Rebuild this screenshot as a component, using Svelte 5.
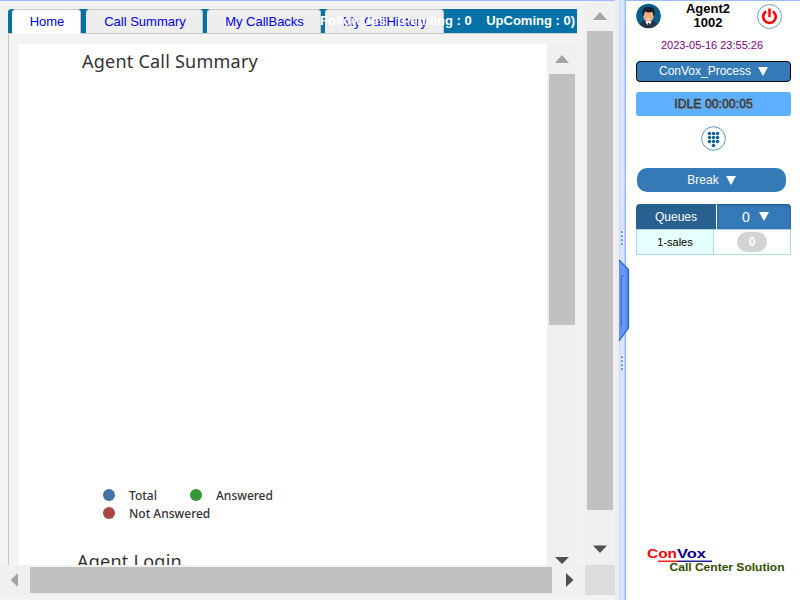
<script>
  const tabs = [
    { label: 'Home', width: 69, gap: 5, active: true },
    { label: 'Call Summary', width: 117, gap: 4 },
    { label: 'My CallBacks', width: 114, gap: 4 },
    { label: 'My CallHistory', width: 119, gap: 0 }
  ];
  const legend = [
    [{ label: 'Total', color: '#4572a7' }, { label: 'Answered', color: '#32963b' }],
    [{ label: 'Not Answered', color: '#aa4643' }]
  ];
  const dots = [0, 1, 2, 3];
</script>

<div class="app">
  <main class="left">
    <div class="upper">
      <div class="page">
        <nav class="tabs">
          {#each tabs as t}
            <span class="tab" class:active={t.active} style:width="{t.width}px" style:margin-right="{t.gap}px">{t.label}</span>
          {/each}
          <b class="follow">FollowUps : (Pending : 0 &nbsp;&nbsp; UpComing : 0)</b>
        </nav>
        <div class="panel">
          <section class="chart">
            <h2 class="sum"><span>Agent Call Summary</span></h2>
            <div class="legend">
              {#each legend as row}
                <div class="row">
                  {#each row as item}
                    <div class="item"><i style:background={item.color}></i><span>{item.label}</span></div>
                  {/each}
                </div>
              {/each}
            </div>
            <h2 class="login">Agent Login</h2>
          </section>
          <div class="bar inner">
            <svg class="arrow" width="30" height="30"><path d="M8 19L15 11L22 19Z" fill="#a3a3a3" /></svg>
            <div class="thumb"></div>
            <svg class="arrow end" width="30" height="10"><path d="M8 2H22L15 9Z" fill="#505050" /></svg>
          </div>
        </div>
      </div>
      <div class="bar outer">
        <svg class="arrow" width="30" height="30"><path d="M8 19L15 11L22 19Z" fill="#a3a3a3" /></svg>
        <div class="thumb"></div>
        <svg class="arrow end" width="30" height="30"><path d="M8 10.5H22L15 18Z" fill="#505050" /></svg>
      </div>
    </div>
    <div class="hbar">
      <svg width="30" height="30"><path d="M18 8V22L10.5 15Z" fill="#a3a3a3" /></svg>
      <div class="hthumb"></div>
      <svg class="right" width="33" height="30"><path d="M15 8V22L22.5 15Z" fill="#505050" /></svg>
      <div class="corner"></div>
    </div>
  </main>

  <div class="gutter"></div>
  <div class="splitter">
    <svg class="grip" width="10" height="150" viewBox="0 0 10 150">
      <defs>
        <linearGradient id="handle"><stop stop-color="#608ff0" /><stop offset=".5" stop-color="#6e9af2" /><stop offset="1" stop-color="#4d80e8" /></linearGradient>
      </defs>
      {#each dots as d}
        <path d="M3 {d * 4}h2v2h-2zM3 {d * 4 + 125}h2v2h-2z" fill="#fff" />
        <path d="M2 {d * 4 + 1}h2v2h-2zM2 {d * 4 + 126}h2v2h-2z" fill="#6c9cf0" />
      {/each}
      <path d="M0 30L9.5 39.5V98L0 111Z" fill="url(#handle)" />
      <path d="M0 30L9.5 39.5V98L0 111" fill="none" stroke="#285fdf" stroke-width="1.2" />
      <path d="M5 46H2.5V96" fill="none" stroke="#2f6de0" />
    </svg>
  </div>

  <aside class="side">
    <header>
      <svg class="avatar" width="26" height="26" viewBox="0 0 26 26">
        <circle cx="12.5" cy="13" r="12.3" fill="#075c88" />
        <path d="M3.5 21Q5 18.5 9.5 17.5H16Q20 18.5 21.5 21A12.3 12.3 0 0 1 3.5 21Z" fill="#263445" />
        <path d="M9.5 17H15.5L15 20L12.5 23L10 20Z" fill="#f4f4f4" />
        <ellipse cx="12.5" cy="12.5" rx="5.3" ry="6" fill="#f2ae85" />
        <path d="M6.8 13Q4.5 4 12 4Q20.5 3 18.2 13H17.5L16.5 9Q12 10 9 8.5L7.5 13Z" fill="#17212b" />
        <path d="M10.5 15.5Q12.5 17.5 14.5 15.5Z" fill="#fff" />
        <path d="M12 20H13.3L13.7 24H11.5Z" fill="#1b2836" />
      </svg>
      <div class="who">Agent2<br />1002</div>
      <svg class="power" width="26" height="26" viewBox="0 0 26 26">
        <circle cx="13.5" cy="13.5" r="12" fill="#fff" stroke="#6ba0c8" />
        <path d="M10.2 8.3A6.3 6.3 0 1 0 16.8 8.3" fill="none" stroke="#f00" stroke-width="2.6" />
        <path d="M13.5 5.5V14" stroke="#f00" stroke-width="2.4" />
      </svg>
    </header>
    <time>2023-05-16 23:55:26</time>
    <div class="process"><span>ConVox_Process</span><i class="down"></i></div>
    <div class="idle">IDLE 00:00:05</div>
    <svg class="pad" width="26" height="26" viewBox="0 0 26 26">
      <circle cx="13.5" cy="12.5" r="11.8" fill="#fff" stroke="#5d96b9" />
      {#each dots as r}
        {#each [9.5, 13.5, 17.5] as x}
          {#if r < 3 || x === 13.5}<circle cx={x} cy={7.5 + r * 4} r="1.7" fill="#0d5f9c" />{/if}
        {/each}
      {/each}
    </svg>
    <div class="break">Break<i class="down"></i></div>
    <div class="queues">
      <div class="qhead"><div class="qname">Queues</div><div class="qcount">0<i class="down"></i></div></div>
      <div class="qrow"><div class="sales">1-sales</div><div class="value"><b>0</b></div></div>
    </div>
    <svg class="logo" width="150" height="32" viewBox="0 0 150 32">
      <g font-family="Liberation Sans, sans-serif" font-weight="bold">
        <text x="1" y="13.3" font-size="13" textLength="30" lengthAdjust="spacingAndGlyphs" fill="#f00">Con</text>
        <text x="31" y="13.3" font-size="13" textLength="29" lengthAdjust="spacingAndGlyphs" fill="#00008b">Vox</text>
        <text x="23.5" y="25.8" font-size="10" textLength="115" lengthAdjust="spacingAndGlyphs" fill="#334d00">Call Center Solution</text>
      </g>
      <path d="M12 16.3H32" stroke="#f22" stroke-width="1.6" />
      <path d="M32 16.3H66" stroke="#22229a" stroke-width="1.6" />
    </svg>
  </aside>
</div>

<style>
  :global(body) { margin: 0; overflow: hidden; }
  .app { width: 800px; height: 600px; display: flex; overflow: hidden; box-sizing: border-box; font-family: "Liberation Sans", Arial, sans-serif; background: #fff; }
  .app * { box-sizing: border-box; }
  .left { width: 615px; height: 600px; border-top: 1px solid #99bbff; background: #f3f3f3; display: flex; flex-direction: column; }
  .upper { height: 564px; display: flex; }
  .page { width: 569px; height: 556px; margin: 8px 8px 0; border-left: 1px solid #c8c8c8; flex: none; }
  .tabs { position: relative; width: 569px; height: 25px; margin-left: -1px; padding-left: 4px; display: flex; background: linear-gradient(#0572a7 24px, #ccc 24px); border-radius: 4px 0 0; }
  .tab { flex: none; height: 25px; padding-left: 2px; border: 1px solid #c8c8c8; border-left: 0; border-radius: 4px 4px 0 0; background: #eee; color: #00e; font-size: 13px; line-height: 23px; text-align: center; }
  .active { background: #fff; border-bottom-color: #fff; }
  .follow { position: absolute; right: 2px; top: 2px; font-size: 13px; line-height: 20px; color: #fff; white-space: nowrap; }
  .panel { height: 522px; margin: 10px 0 0 10px; display: flex; }
  .chart { width: 528px; height: 521px; background: #fff; overflow: hidden; font-family: "Noto Sans", sans-serif; color: #333; }
  h2 { margin: 0; font-weight: 400; font-size: 18px; line-height: 24px; white-space: nowrap; }
  .sum { padding: 5px 0 0 63px; height: 442px; letter-spacing: .23px; }
  .legend { padding-left: 84px; height: 63px; font-size: 12px; font-weight: 500; }
  .row { display: flex; height: 18px; }
  .item { display: flex; width: 87px; align-items: center; white-space: nowrap; }
  .item i { width: 12px; height: 12px; border-radius: 50%; margin-right: 14px; flex: none; }
  .login { padding-left: 58px; letter-spacing: .25px; }
  .bar { width: 30px; background: #f0f0f0; display: flex; flex-direction: column; flex: none; }
  .inner { height: 521px; }
  .outer { height: 564px; }
  .arrow { flex: none; }
  .thumb { margin: 0 2px; height: 479px; background: #c1c1c1; }
  .inner .thumb { height: 251px; }
  .end { margin-top: auto; }
  .hbar { height: 30px; display: flex; background: #f0f0f0; }
  .right { margin-left: -1px; margin-right: 1px; }
  .hthumb { width: 522px; height: 26px; margin-top: 2px; background: #c1c1c1; }
  .corner { width: 30px; height: 30px; background: #dcdcdc; }
  .gutter { width: 4px; background: #eee; }
  .splitter { width: 7px; height: 600px; padding-top: 230px; background: linear-gradient(90deg, #c9dffd, #dae9ff 5px, #99bbff 6px); z-index: 1; }
  .grip { display: block; overflow: visible; }
  .side { width: 174px; height: 600px; border-top: 1px solid #99bbff; padding-left: 10px; display: flex; flex-direction: column; font-size: 12px; color: #fff; }
  header { display: flex; height: 37px; width: 155px; flex: none; }
  .avatar { margin: 2px 0 0 0; }
  .who { width: 92px; margin-right: 2px; padding-top: 1px; color: #000; font-size: 13px; font-weight: bold; line-height: 14px; text-align: center; }
  .power { margin: 2px 0 0 0; }
  time { height: 23px; width: 152px; font-size: 11px; line-height: 14px; color: #800080; text-align: center; }
  .process, .idle, .break { display: flex; align-items: center; justify-content: center; flex: none; }
  .down { display: inline-block; border: 5px solid transparent; border-top: 9px solid #fff; border-bottom: 0; }
  .process { width: 155px; height: 21px; padding-bottom: 1px; background: #337ab7; border: 1px solid #000; border-radius: 4px; gap: 7px; }
  .idle { margin-top: 10px; width: 155px; height: 24px; border-radius: 3px; background: #5eb0ff; color: #333; letter-spacing: .15px; -webkit-text-stroke: .3px #333; text-shadow: 1px 1px 1px #888; }
  .pad { margin: 10px 0 0 64px; flex: none; }
  .break { width: 149px; height: 24px; margin: 16px 0 0 1px; border-radius: 10px; background: #337ab7; gap: 7px; }
  .queues { width: 155px; margin-top: 12px; }
  .qhead { display: flex; height: 25px; line-height: 26px; gap: 1px; text-align: center; }
  .qname { width: 80px; background: #286090; border-radius: 4px 0 0; }
  .qcount { width: 74px; padding-left: 3px; background: #337ab7; box-shadow: inset 0 1px 3px #205781; border-radius: 0 4px 0 0; display: flex; align-items: center; justify-content: center; gap: 9px; font-size: 14px; }
  .qrow { display: flex; height: 26px; border: 1px solid #add8e6; }
  .sales { width: 77px; background: #e6ffff; border-right: 1px solid #add8e6; color: #000; font-size: 11px; text-align: center; line-height: 24px; }
  .value { flex: 1; display: flex; align-items: center; justify-content: center; }
  .value b { width: 30px; height: 20px; border-radius: 10px; background: #d3d3d3; line-height: 20px; text-align: center; }
  .logo { margin: 290px 0 0 10px; flex: none; }
</style>
